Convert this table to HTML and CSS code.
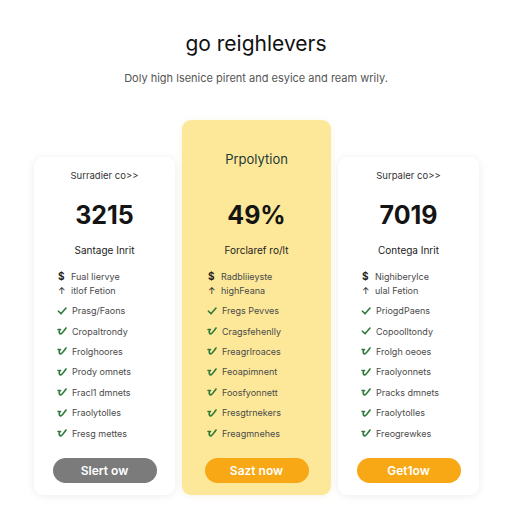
FILE: index.html
```html
<!DOCTYPE html>
<html>
<head>
<meta charset="utf-8">
<link rel="stylesheet" href="styles.css">
</head>
<body>
<header class="hero">
  <h1 class="title">go reighlevers</h1>
  <p class="subtitle">Doly high lsenice pirent and esyice and ream wrily.</p>
</header>
<main class="plans">
  <section class="card">
    <div class="card-head">Surradier co&gt;&gt;</div>
    <div class="num">3215</div>
    <div class="unit">Santage Inrit</div>
    <ul class="list">
      <li class="plain"><span class="ic">$</span>Fual Iiervye</li>
      <li class="plain"><span class="ic">↑</span>itlof Fetion</li>
      <li><svg class="ck" viewBox="0 0 10 10"><path d="M1.5 5.2 L4 7.8 L9 2"/></svg>Prasg/Faons</li>
      <li><svg class="ck" viewBox="0 0 10 10"><path d="M1 3.5 H3.5 M3 3.5 Q1.2 6.5 3.4 8 Q4.6 8.4 9 2"/></svg>Cropaltrondy</li>
      <li><svg class="ck" viewBox="0 0 10 10"><path d="M1 3.5 H3.5 M3 3.5 Q1.2 6.5 3.4 8 Q4.6 8.4 9 2"/></svg>Frolghoores</li>
      <li><svg class="ck" viewBox="0 0 10 10"><path d="M1 3.5 H3.5 M3 3.5 Q1.2 6.5 3.4 8 Q4.6 8.4 9 2"/></svg>Prody omnets</li>
      <li><svg class="ck" viewBox="0 0 10 10"><path d="M1 3.5 H3.5 M3 3.5 Q1.2 6.5 3.4 8 Q4.6 8.4 9 2"/></svg>Fracl1 dmnets</li>
      <li><svg class="ck" viewBox="0 0 10 10"><path d="M1 3.5 H3.5 M3 3.5 Q1.2 6.5 3.4 8 Q4.6 8.4 9 2"/></svg>Fraolytolles</li>
      <li><svg class="ck" viewBox="0 0 10 10"><path d="M1 3.5 H3.5 M3 3.5 Q1.2 6.5 3.4 8 Q4.6 8.4 9 2"/></svg>Fresg mettes</li>
    </ul>
    <button class="btn gray">Slert ow</button>
  </section>
  <section class="card featured">
    <div class="card-head">Prpolytion</div>
    <div class="num">49%</div>
    <div class="unit">Forclaref ro/lt</div>
    <ul class="list">
      <li class="plain"><span class="ic">$</span>Radbliieyste</li>
      <li class="plain"><span class="ic">↑</span>highFeana</li>
      <li><svg class="ck" viewBox="0 0 10 10"><path d="M1.5 5.2 L4 7.8 L9 2"/></svg>Fregs Pevves</li>
      <li><svg class="ck" viewBox="0 0 10 10"><path d="M1 3.5 H3.5 M3 3.5 Q1.2 6.5 3.4 8 Q4.6 8.4 9 2"/></svg>Cragsfehenlly</li>
      <li><svg class="ck" viewBox="0 0 10 10"><path d="M1 3.5 H3.5 M3 3.5 Q1.2 6.5 3.4 8 Q4.6 8.4 9 2"/></svg>Freagrlroaces</li>
      <li><svg class="ck" viewBox="0 0 10 10"><path d="M1 3.5 H3.5 M3 3.5 Q1.2 6.5 3.4 8 Q4.6 8.4 9 2"/></svg>Feoapimnent</li>
      <li><svg class="ck" viewBox="0 0 10 10"><path d="M1 3.5 H3.5 M3 3.5 Q1.2 6.5 3.4 8 Q4.6 8.4 9 2"/></svg>Foosfyonnett</li>
      <li><svg class="ck" viewBox="0 0 10 10"><path d="M1 3.5 H3.5 M3 3.5 Q1.2 6.5 3.4 8 Q4.6 8.4 9 2"/></svg>Fresgtrnekers</li>
      <li><svg class="ck" viewBox="0 0 10 10"><path d="M1 3.5 H3.5 M3 3.5 Q1.2 6.5 3.4 8 Q4.6 8.4 9 2"/></svg>Freagmnehes</li>
    </ul>
    <button class="btn orange">Sazt now</button>
  </section>
  <section class="card">
    <div class="card-head">Surpaler co&gt;&gt;</div>
    <div class="num">7019</div>
    <div class="unit">Contega Inrit</div>
    <ul class="list">
      <li class="plain"><span class="ic">$</span>Nighiberylce</li>
      <li class="plain"><span class="ic">↑</span>ulal Fetion</li>
      <li><svg class="ck" viewBox="0 0 10 10"><path d="M1.5 5.2 L4 7.8 L9 2"/></svg>PriogdPaens</li>
      <li><svg class="ck" viewBox="0 0 10 10"><path d="M1.5 5.2 L4 7.8 L9 2"/></svg>Copoolltondy</li>
      <li><svg class="ck" viewBox="0 0 10 10"><path d="M1 3.5 H3.5 M3 3.5 Q1.2 6.5 3.4 8 Q4.6 8.4 9 2"/></svg>Frolgh oeoes</li>
      <li><svg class="ck" viewBox="0 0 10 10"><path d="M1 3.5 H3.5 M3 3.5 Q1.2 6.5 3.4 8 Q4.6 8.4 9 2"/></svg>Fraolyonnets</li>
      <li><svg class="ck" viewBox="0 0 10 10"><path d="M1 3.5 H3.5 M3 3.5 Q1.2 6.5 3.4 8 Q4.6 8.4 9 2"/></svg>Pracks dmnets</li>
      <li><svg class="ck" viewBox="0 0 10 10"><path d="M1 3.5 H3.5 M3 3.5 Q1.2 6.5 3.4 8 Q4.6 8.4 9 2"/></svg>Fraolytolles</li>
      <li><svg class="ck" viewBox="0 0 10 10"><path d="M1 3.5 H3.5 M3 3.5 Q1.2 6.5 3.4 8 Q4.6 8.4 9 2"/></svg>Frеogrеwkes</li>
    </ul>
    <button class="btn orange">Get1ow</button>
  </section>
</main>
</body>
</html>
```

FILE: styles.css
```css
* { box-sizing: border-box; }
html, body { margin: 0; padding: 0; background: #ffffff; }
body {
  width: 512px;
  height: 512px;
  font-family: "Inter", "Liberation Sans", sans-serif;
  color: #1a1a1a;
  overflow: hidden;
}
.hero {
  text-align: center;
  padding-top: 30px;
}
.title {
  margin: 0;
  font-size: 21px;
  font-weight: 400;
  line-height: 28px;
  color: #111;
  letter-spacing: 0;
}
.subtitle {
  margin: 13px 0 0;
  font-size: 11px;
  line-height: 14px;
  color: #555;
}
.plans {
  display: flex;
  align-items: flex-end;
  gap: 7px;
  padding-left: 34px;
  margin-top: 35px;
}
.card {
  width: 141px;
  height: 338px;
  background: #fff;
  border-radius: 9px;
  box-shadow: 0 1px 8px rgba(0, 0, 0, 0.08);
  display: flex;
  flex-direction: column;
  align-items: center;
  padding: 12px 0 12px;
}
.card.featured {
  width: 149px;
  height: 375px;
  background: #fde899;
  box-shadow: 0 1px 6px rgba(200, 160, 40, 0.12);
  padding-top: 31px;
}
.card-head {
  font-size: 9.5px;
  line-height: 14px;
  color: #333;
}
.featured .card-head {
  font-size: 13px;
  line-height: 16px;
  color: #1e3838;
}
.num {
  margin-top: 17px;
  font-size: 25px;
  font-weight: 700;
  line-height: 30px;
  color: #141414;
}
.featured .num { margin-top: 33px; }
.unit {
  margin-top: 13px;
  font-size: 10px;
  line-height: 14px;
  color: #222;
}
.list {
  list-style: none;
  margin: 12px 0 0;
  padding: 0 0 0 23px;
  align-self: stretch;
  font-size: 9px;
  color: #4a4a4a;
}
.featured .list { padding-left: 25px; }
.list li {
  display: flex;
  align-items: center;
  height: 20.4px;
}
.list li.plain { height: 14px; }
.list li.plain + li:not(.plain) { margin-top: 3.5px; }
.ic {
  width: 14px;
  font-size: 10px;
  font-weight: 700;
  color: #222;
  text-align: left;
  padding-left: 1px;
}
.list li.plain + li.plain .ic { font-weight: 400; font-size: 9px; }
.ck {
  width: 10px;
  height: 10px;
  margin-right: 5px;
  fill: none;
  stroke: #2f7a3b;
  stroke-width: 1.6;
  stroke-linecap: round;
  stroke-linejoin: round;
}
.btn {
  margin-top: auto;
  width: 104px;
  height: 25px;
  border: none;
  border-radius: 13px;
  font-family: "Inter", "Liberation Sans", sans-serif;
  font-size: 12px;
  font-weight: 600;
  color: #fff;
}
.btn.gray { background: #7b7b7b; }
.btn.orange { background: #f8a815; }
```
